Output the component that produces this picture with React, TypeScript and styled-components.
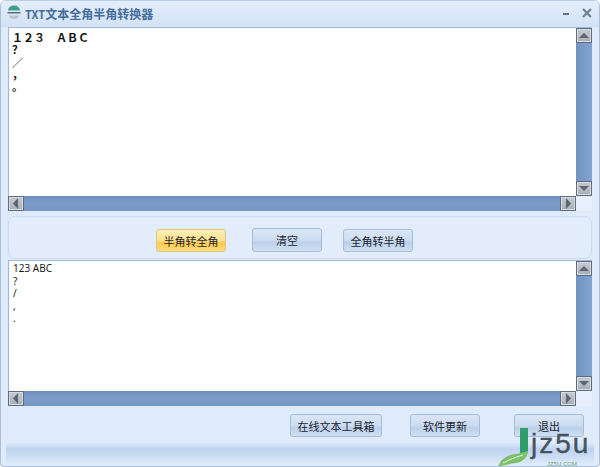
import React from "react";
import styled, { createGlobalStyle } from "styled-components";

const Global = createGlobalStyle`
  html, body { margin: 0; padding: 0; background: #fff; overflow: hidden; }
  * { box-sizing: border-box; }
`;

const cjk = `"Noto Sans CJK SC", "Noto Sans", sans-serif`;

const Window = styled.div`
  position: relative;
  width: 600px;
  height: 467px;
  display: flex;
  flex-direction: column;
  background: #dfeafa;
  border: 1px solid #a9c0dc;
  border-top-color: #b9cde6;
  border-radius: 6px 6px 4px 4px;
  overflow: hidden;
  font-family: ${cjk};
`;

const TitleBar = styled.div`
  height: 26px;
  flex: none;
  display: flex;
  align-items: center;
  padding: 0 7px 2px 6px;
  background: linear-gradient(#e4eefb, #d9e6f8 60%, #d3e2f6);
`;

const Title = styled.div`
  margin-left: 4px;
  font-size: 12px;
  font-weight: 700;
  color: #456d9b;
  white-space: nowrap;
  flex: 1;
`;

const TitleLatin = styled.span`
  font-size: 11px;
`;

const TitleButtons = styled.div`
  display: flex;
  align-items: center;
  gap: 12px;
`;

const Editor = styled.div<{ $rows: string }>`
  flex: none;
  margin: 0 7px;
  display: grid;
  grid-template-columns: 568px 16px;
  grid-template-rows: ${(p) => p.$rows};
  background: #fff;
  border-top: 1px solid #9fb8d6;
`;

const TextPane = styled.div<{ $top: number }>`
  background: #fff;
  border-left: 1px solid #9fb8d6;
  padding: ${(p) => p.$top}px 0 0 3px;
  overflow: hidden;
  white-space: pre;
`;

const WideLine = styled.div`
  height: 12.25px;
  line-height: 12.25px;
  font-size: 11px;
  font-weight: 700;
  color: #111;
`;

const PlainLine = styled.div`
  height: 12.5px;
  line-height: 12.5px;
  padding-left: 1px;
  font-family: "Noto Sans", sans-serif;
  font-size: 10px;
  color: #1a1a1a;
`;

const VTrack = styled.div`
  display: flex;
  flex-direction: column;
  justify-content: space-between;
  background: linear-gradient(90deg, #7093c2, #84a4cf);
`;

const HTrack = styled.div`
  display: flex;
  justify-content: space-between;
  background: linear-gradient(#6c8fbd, #7c9cc8 40%, #7496c4);
`;

const ScrollCorner = styled.div`
  background: #e6effb;
`;

const ScrollButton = styled.div`
  width: 16px;
  height: 15px;
  flex: none;
  display: flex;
  align-items: center;
  justify-content: center;
  background: linear-gradient(#c6cbd2, #a7aeb8);
  border: 1px solid #5d6d80;
  box-shadow: inset 0 0 0 1px #d7dbe0;
`;

const Panel = styled.div`
  flex: none;
  height: 43px;
  margin: 5px 7px 1px;
  padding-top: 6px;
  display: flex;
  align-items: center;
  border: 1px solid #c9dbf1;
  border-radius: 7px;
  background: #e2ecfa;
`;

const Button = styled.div<{ $w: number; $active?: boolean; $ml: number; $raised?: boolean }>`
  width: ${(p) => p.$w}px;
  height: ${(p) => (p.$raised ? 24 : 23)}px;
  margin-left: ${(p) => p.$ml}px;
  margin-bottom: ${(p) => (p.$raised ? 1 : 0)}px;
  flex: none;
  display: flex;
  align-items: center;
  justify-content: center;
  font-size: 11px;
  color: #1d2530;
  border-radius: 3px;
  border: 1px solid ${(p) => (p.$active ? "#d9c68a" : "#a6bcd8")};
  background: ${(p) =>
    p.$active
      ? "linear-gradient(#fff0b8, #ffe08a 50%, #ffc94f 60%, #ffdc7c)"
      : "linear-gradient(#dae6f5, #ccdcf0 50%, #bcd0ea 60%, #cedff3)"};
`;

const ActionRow = styled.div`
  flex: none;
  height: 23px;
  margin-top: 8px;
  display: flex;
  padding-left: 289px;
`;

const StatusBar = styled.div`
  flex: none;
  height: 20px;
  margin: 6px 5px 0;
  border-radius: 0 0 3px 3px;
  background: linear-gradient(#dde9f9, #bfd4f1 30%, #c6d9f3 55%, #dbe7f8);
`;

const Logo = styled.div`
  position: absolute;
  left: 496px;
  top: 426px;
  width: 100px;
  height: 41px;
`;

const LogoMark = styled.svg`
  position: absolute;
  left: 0;
  top: 0;
`;

const LogoText = styled.div`
  position: absolute;
  left: 34px;
  top: -1px;
  font-family: "Liberation Sans", sans-serif;
  font-size: 28px;
  line-height: 36px;
  letter-spacing: 2px;
  color: #45545f;
  -webkit-text-stroke: 0.4px #45545f;
`;

const LogoSub = styled.div`
  position: absolute;
  left: 50px;
  top: 34px;
  font-family: "Liberation Sans", sans-serif;
  font-size: 6px;
  line-height: 7px;
  color: #6fa86a;
`;

const Tri = ({ dir }: { dir: "up" | "down" | "left" | "right" }) => {
  const pts = {
    up: "1,7 6,2 11,7",
    down: "1,2 6,7 11,2",
    left: "7,0 7,11 2,5.5",
    right: "3,0 3,11 8,5.5",
  }[dir];
  const size = dir === "up" || dir === "down" ? { w: 12, h: 9 } : { w: 10, h: 11 };
  return (
    <svg width={size.w} height={size.h} viewBox={`0 0 ${size.w} ${size.h}`}>
      <polygon points={pts} fill="#5c6570" />
    </svg>
  );
};

const AppIcon = () => (
  <svg width="14" height="16" viewBox="0 0 14 16">
    <path d="M1 5.5a6 5 0 0 1 12 0z" fill="#3f9d8a" />
    <rect x="0.5" y="7" width="13" height="1.5" fill="#5a6b78" />
    <path d="M2 10.5h10a5 3.5 0 0 1-10 0z" fill="#b9c6cf" />
  </svg>
);

const Minimize = () => (
  <svg width="8" height="8" viewBox="0 0 8 8">
    <rect x="1" y="4" width="6" height="2" fill="#5f7287" />
  </svg>
);

const Close = () => (
  <svg width="10" height="10" viewBox="0 0 10 10">
    <path d="M1 1l8 8M9 1l-8 8" stroke="#6d7f93" strokeWidth="2.2" />
  </svg>
);

const Scrollbars = () => (
  <>
    <VTrack>
      <ScrollButton><Tri dir="up" /></ScrollButton>
      <ScrollButton><Tri dir="down" /></ScrollButton>
    </VTrack>
    <HTrack>
      <ScrollButton><Tri dir="left" /></ScrollButton>
      <ScrollButton><Tri dir="right" /></ScrollButton>
    </HTrack>
    <ScrollCorner />
  </>
);

export default function App() {
  return (
    <>
      <Global />
      <Window>
        <TitleBar>
          <AppIcon />
          <Title><TitleLatin>TXT</TitleLatin>文本全角半角转换器</Title>
          <TitleButtons>
            <Minimize />
            <Close />
          </TitleButtons>
        </TitleBar>
        <Editor $rows="168px 15px">
          <TextPane $top={3}>
            <WideLine>１２３　ＡＢＣ</WideLine>
            <WideLine>？</WideLine>
            <WideLine>／</WideLine>
            <WideLine>，</WideLine>
            <WideLine>。</WideLine>
          </TextPane>
          <Scrollbars />
        </Editor>
        <Panel>
          <Button $w={70} $ml={147} $active>半角转全角</Button>
          <Button $w={70} $ml={26} $raised>清空</Button>
          <Button $w={70} $ml={21}>全角转半角</Button>
        </Panel>
        <Editor $rows="130px 15px">
          <TextPane $top={1}>
            <PlainLine>123 ABC</PlainLine>
            <PlainLine>?</PlainLine>
            <PlainLine>/</PlainLine>
            <PlainLine>,</PlainLine>
            <PlainLine>.</PlainLine>
          </TextPane>
          <Scrollbars />
        </Editor>
        <ActionRow>
          <Button $w={92} $ml={0}>在线文本工具箱</Button>
          <Button $w={70} $ml={28}>软件更新</Button>
          <Button $w={70} $ml={34}>退出</Button>
        </ActionRow>
        <StatusBar />
        <Logo>
          <LogoMark width="36" height="41" viewBox="0 0 36 41">
            <path d="M23 1h8v22q0 4-3 5l-5 2z" fill="#2f9e6c" />
            <path d="M1 40q4-12 18-13l12-3q-1 10-12 12-9 1-18 4z" fill="#7cc06c" />
            <path d="M6 36q9-5 20-8" stroke="#e6f4e0" strokeWidth="1" fill="none" />
          </LogoMark>
          <LogoText>jz5u</LogoText>
          <LogoSub>JZ5U.COM</LogoSub>
        </Logo>
      </Window>
    </>
  );
}
